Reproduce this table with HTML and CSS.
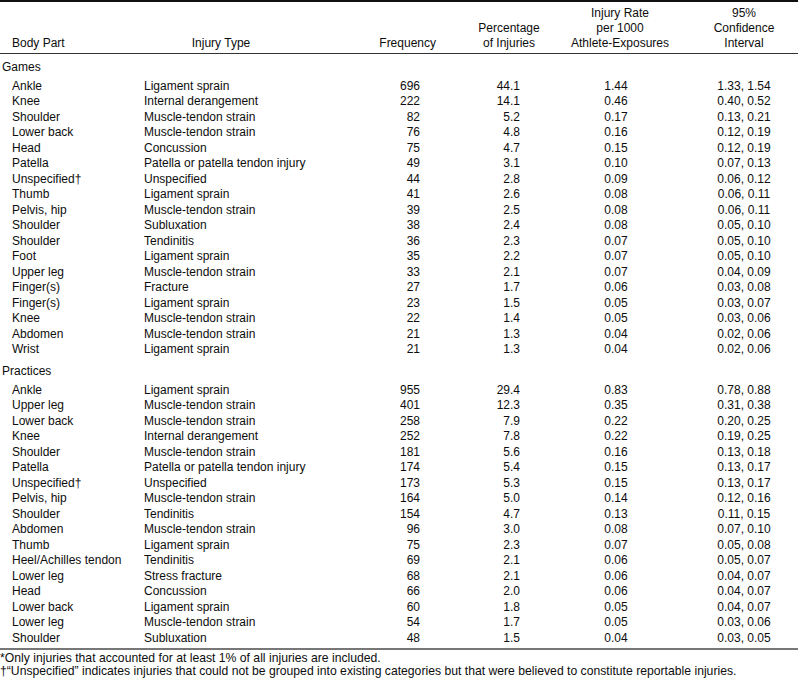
FILE: index.html
```html
<!DOCTYPE html>
<html>
<head>
<meta charset="utf-8">
<link rel="stylesheet" href="styles.css">
</head>
<body>
<table class="data">
  <colgroup>
    <col class="c-part"><col class="c-type"><col class="c-freq"><col class="c-pct"><col class="c-rate"><col class="c-ci">
  </colgroup>
  <thead>
    <tr>
      <th class="h-part">Body Part</th>
      <th class="h-type">Injury Type</th>
      <th class="h-freq">Frequency</th>
      <th class="h-pct">Percentage<br>of Injuries</th>
      <th class="h-rate">Injury Rate<br>per 1000<br>Athlete-Exposures</th>
      <th class="h-ci">95%<br>Confidence<br>Interval</th>
    </tr>
  </thead>
  <tbody>
    <tr class="section"><td colspan="6">Games</td></tr>
    <tr><td>Ankle</td><td>Ligament sprain</td><td>696</td><td>44.1</td><td>1.44</td><td>1.33, 1.54</td></tr>
    <tr><td>Knee</td><td>Internal derangement</td><td>222</td><td>14.1</td><td>0.46</td><td>0.40, 0.52</td></tr>
    <tr><td>Shoulder</td><td>Muscle-tendon strain</td><td>82</td><td>5.2</td><td>0.17</td><td>0.13, 0.21</td></tr>
    <tr><td>Lower back</td><td>Muscle-tendon strain</td><td>76</td><td>4.8</td><td>0.16</td><td>0.12, 0.19</td></tr>
    <tr><td>Head</td><td>Concussion</td><td>75</td><td>4.7</td><td>0.15</td><td>0.12, 0.19</td></tr>
    <tr><td>Patella</td><td>Patella or patella tendon injury</td><td>49</td><td>3.1</td><td>0.10</td><td>0.07, 0.13</td></tr>
    <tr><td>Unspecified†</td><td>Unspecified</td><td>44</td><td>2.8</td><td>0.09</td><td>0.06, 0.12</td></tr>
    <tr><td>Thumb</td><td>Ligament sprain</td><td>41</td><td>2.6</td><td>0.08</td><td>0.06, 0.11</td></tr>
    <tr><td>Pelvis, hip</td><td>Muscle-tendon strain</td><td>39</td><td>2.5</td><td>0.08</td><td>0.06, 0.11</td></tr>
    <tr><td>Shoulder</td><td>Subluxation</td><td>38</td><td>2.4</td><td>0.08</td><td>0.05, 0.10</td></tr>
    <tr><td>Shoulder</td><td>Tendinitis</td><td>36</td><td>2.3</td><td>0.07</td><td>0.05, 0.10</td></tr>
    <tr><td>Foot</td><td>Ligament sprain</td><td>35</td><td>2.2</td><td>0.07</td><td>0.05, 0.10</td></tr>
    <tr><td>Upper leg</td><td>Muscle-tendon strain</td><td>33</td><td>2.1</td><td>0.07</td><td>0.04, 0.09</td></tr>
    <tr><td>Finger(s)</td><td>Fracture</td><td>27</td><td>1.7</td><td>0.06</td><td>0.03, 0.08</td></tr>
    <tr><td>Finger(s)</td><td>Ligament sprain</td><td>23</td><td>1.5</td><td>0.05</td><td>0.03, 0.07</td></tr>
    <tr><td>Knee</td><td>Muscle-tendon strain</td><td>22</td><td>1.4</td><td>0.05</td><td>0.03, 0.06</td></tr>
    <tr><td>Abdomen</td><td>Muscle-tendon strain</td><td>21</td><td>1.3</td><td>0.04</td><td>0.02, 0.06</td></tr>
    <tr><td>Wrist</td><td>Ligament sprain</td><td>21</td><td>1.3</td><td>0.04</td><td>0.02, 0.06</td></tr>
  </tbody>
  <tbody>
    <tr class="section"><td colspan="6">Practices</td></tr>
    <tr><td>Ankle</td><td>Ligament sprain</td><td>955</td><td>29.4</td><td>0.83</td><td>0.78, 0.88</td></tr>
    <tr><td>Upper leg</td><td>Muscle-tendon strain</td><td>401</td><td>12.3</td><td>0.35</td><td>0.31, 0.38</td></tr>
    <tr><td>Lower back</td><td>Muscle-tendon strain</td><td>258</td><td>7.9</td><td>0.22</td><td>0.20, 0.25</td></tr>
    <tr><td>Knee</td><td>Internal derangement</td><td>252</td><td>7.8</td><td>0.22</td><td>0.19, 0.25</td></tr>
    <tr><td>Shoulder</td><td>Muscle-tendon strain</td><td>181</td><td>5.6</td><td>0.16</td><td>0.13, 0.18</td></tr>
    <tr><td>Patella</td><td>Patella or patella tendon injury</td><td>174</td><td>5.4</td><td>0.15</td><td>0.13, 0.17</td></tr>
    <tr><td>Unspecified†</td><td>Unspecified</td><td>173</td><td>5.3</td><td>0.15</td><td>0.13, 0.17</td></tr>
    <tr><td>Pelvis, hip</td><td>Muscle-tendon strain</td><td>164</td><td>5.0</td><td>0.14</td><td>0.12, 0.16</td></tr>
    <tr><td>Shoulder</td><td>Tendinitis</td><td>154</td><td>4.7</td><td>0.13</td><td>0.11, 0.15</td></tr>
    <tr><td>Abdomen</td><td>Muscle-tendon strain</td><td>96</td><td>3.0</td><td>0.08</td><td>0.07, 0.10</td></tr>
    <tr><td>Thumb</td><td>Ligament sprain</td><td>75</td><td>2.3</td><td>0.07</td><td>0.05, 0.08</td></tr>
    <tr><td>Heel/Achilles tendon</td><td>Tendinitis</td><td>69</td><td>2.1</td><td>0.06</td><td>0.05, 0.07</td></tr>
    <tr><td>Lower leg</td><td>Stress fracture</td><td>68</td><td>2.1</td><td>0.06</td><td>0.04, 0.07</td></tr>
    <tr><td>Head</td><td>Concussion</td><td>66</td><td>2.0</td><td>0.06</td><td>0.04, 0.07</td></tr>
    <tr><td>Lower back</td><td>Ligament sprain</td><td>60</td><td>1.8</td><td>0.05</td><td>0.04, 0.07</td></tr>
    <tr><td>Lower leg</td><td>Muscle-tendon strain</td><td>54</td><td>1.7</td><td>0.05</td><td>0.03, 0.06</td></tr>
    <tr class="last"><td>Shoulder</td><td>Subluxation</td><td>48</td><td>1.5</td><td>0.04</td><td>0.03, 0.05</td></tr>
  </tbody>
</table>
<div class="notes">
  <p class="note">*Only injuries that accounted for at least 1% of all injuries are included.</p>
  <p class="note">†“Unspecified” indicates injuries that could not be grouped into existing categories but that were believed to constitute reportable injuries.</p>
</div>
</body>
</html>
```

FILE: styles.css
```css
html, body {
  margin: 0;
  padding: 0;
  background: #fff;
}

body {
  font-family: "Liberation Sans", Arial, Helvetica, sans-serif;
  font-size: 12px;
  color: #0d0d0d;
  width: 798px;
}

.data {
  width: 798px;
  border-collapse: collapse;
  table-layout: fixed;
  border-top: 2px solid #111;
  border-bottom: 2px solid #777;
}

.c-part { width: 144px; }
.c-type { width: 154px; }
.c-freq { width: 152px; }
.c-pct { width: 118px; }
.c-rate { width: 104px; }
.c-ci { width: 126px; }

.data th {
  font-weight: normal;
  line-height: 15px;
  padding: 4px 0 2px;
  vertical-align: bottom;
  white-space: nowrap;
  border-bottom: 1px solid #333;
}

.h-part { text-align: left; padding-left: 12px !important; }
.h-type { text-align: center; }
.h-freq { text-align: right; padding-right: 14px !important; }
.h-pct { text-align: center; }
.h-rate { text-align: center; }
.h-ci { text-align: center; padding-left: 18px !important; }

.data td {
  padding: 0;
  line-height: 15.5px;
  white-space: nowrap;
}

.data td:nth-child(1) { padding-left: 12px; }
.data td:nth-child(2) { text-align: left; }
.data td:nth-child(3) { text-align: right; padding-right: 30px; }
.data td:nth-child(4) { text-align: right; padding-right: 48px; }
.data td:nth-child(5) { text-align: center; padding-right: 8px; }
.data td:nth-child(6) { text-align: center; padding-left: 18px; }

.data .section td {
  padding: 6.2px 0 3.2px 2px;
  text-align: left;
}

.data .last td {
  padding-bottom: 2px;
}

.notes {
  padding-top: 2px;
}

.note {
  margin: 0;
  font-size: 12.2px;
  line-height: 13px;
}
```
